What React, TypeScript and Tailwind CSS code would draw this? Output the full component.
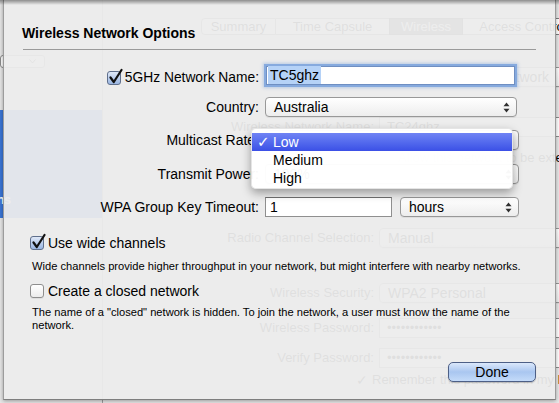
import React from 'react';

function UpDown() {
  return (
    <svg width="7" height="11" viewBox="0 0 7 11" className="shrink-0">
      <path d="M3.5 0.5 L6.5 4.2 L0.5 4.2 Z" fill="#2f2f2f" />
      <path d="M0.5 6.8 L6.5 6.8 L3.5 10.5 Z" fill="#2f2f2f" />
    </svg>
  );
}

function PopUp({ value, className = '' }: { value: string; className?: string }) {
  return (
    <div
      className={`h-[20px] shrink-0 flex items-center justify-between pl-[8px] pr-[6px] rounded-[4px] border border-[#989898] bg-gradient-to-b from-white to-[#ededed] shadow-[0_1px_0_rgba(0,0,0,0.06)] text-[14px] leading-none ${className}`}
    >
      <span className="whitespace-nowrap">{value}</span>
      <UpDown />
    </div>
  );
}

function Checkbox({ checked }: { checked?: boolean }) {
  if (!checked) {
    return (
      <span className="relative block w-[14px] h-[14px] shrink-0 rounded-[3px] border border-[#8e8e8e] bg-gradient-to-b from-white to-[#ececec] shadow-[0_1px_0_rgba(0,0,0,0.06)]" />
    );
  }
  return (
    <span className="relative block w-[14px] h-[14px] shrink-0 rounded-[3px] border border-[#5f6f8c] bg-gradient-to-b from-[#dfe8f7] to-[#9ab6e2]">
      <svg width="15" height="17" viewBox="0 0 15 17" className="absolute left-[0px] top-[-4px]">
        <path d="M2.5 9.5 L5.8 14 L13.5 2" stroke="#111" strokeWidth="2.2" fill="none" strokeLinecap="round" strokeLinejoin="round" />
      </svg>
    </span>
  );
}

function BackRow({ label, children, className = '' }: { label: string; children: React.ReactNode; className?: string }) {
  return (
    <div className={`flex items-center h-[20px] ${className}`}>
      <div className="w-[271px] shrink-0 text-right whitespace-nowrap">{label}</div>
      <div className="ml-[5px] flex">{children}</div>
    </div>
  );
}

function BackField({ value }: { value: string }) {
  return (
    <div className="h-[20px] w-[200px] shrink-0 flex items-center pl-[7px] border border-[#8c8c8c] bg-white whitespace-nowrap">{value}</div>
  );
}

// the window under the sheet, only seen through it
function BackWindow() {
  return (
    <div className="flex h-full text-[13px] text-black">
      <aside className="w-[103px] shrink-0 border-r border-[#9d9d9d] bg-[#e6e6e6] flex flex-col">
        <div className="mt-[55px] w-[45px] h-[13px] rounded-[3px] border border-[#8a8a8a] bg-white flex items-center justify-end pr-[8px]">
          <svg width="7" height="5" viewBox="0 0 7 5">
            <path d="M0.5 0.5 L3.5 4 L6.5 0.5" stroke="#444" fill="none" />
          </svg>
        </div>
        <div className="mt-[42px] h-[108px] bg-[#3a75d6] flex items-end pb-[9px] text-white text-[12px] font-bold">
          <span className="-ml-[3px]">ns</span>
        </div>
      </aside>
      <main className="flex-1 flex flex-col bg-[#e8e8e8] overflow-hidden">
        <div className="mt-[18px] ml-[98px] flex h-[17px] whitespace-nowrap text-[13px] leading-none">
          <div className="w-[75px] shrink-0 flex items-center justify-center border border-[#7c7c7c] rounded-l-[4px] bg-white">Summary</div>
          <div className="w-[113px] shrink-0 flex items-center justify-center border-y border-[#7c7c7c] bg-white">Time Capsule</div>
          <div className="w-[74px] shrink-0 flex items-center justify-center border border-[#3c3c3c] bg-[#5a5a5a] text-white">Wireless</div>
          <div className="w-[120px] shrink-0 flex items-center justify-center border-y border-[#7c7c7c] bg-white">Access Control</div>
        </div>
        <BackRow label="Wireless Mode:" className="mt-[32px]">
          <PopUp value="Create a wireless network" className="w-[220px] text-[13px]" />
        </BackRow>
        <BackRow label="Wireless Network Name:" className="mt-[30px]">
          <BackField value="TC24ghz" />
        </BackRow>
        <div className="mt-[13px] ml-[276px] h-[16px] flex items-center gap-[5px] whitespace-nowrap">
          <Checkbox />
          <span>Allow this network to be extended</span>
        </div>
        <BackRow label="Radio Channel Selection:" className="mt-[62px]">
          <PopUp value="Manual" className="w-[200px] text-[13px]" />
        </BackRow>
        <BackRow label="Wireless Security:" className="mt-[35px]">
          <PopUp value="WPA2 Personal" className="w-[200px] text-[13px]" />
        </BackRow>
        <BackRow label="Wireless Password:" className="mt-[15px]">
          <BackField value="••••••••••••" />
        </BackRow>
        <BackRow label="Verify Password:" className="mt-[10px]">
          <BackField value="••••••••••••" />
        </BackRow>
        <div className="mt-[4px] ml-[253px] h-[16px] flex items-center gap-[4px] whitespace-nowrap">
          <span className="text-[14px]">✓</span>
          <span>Remember this password in my keychain</span>
        </div>
      </main>
    </div>
  );
}

function OptionsSheet() {
  return (
    <div className="absolute left-[3px] top-0 w-[553px] h-[400px] flex flex-col bg-[#ececec]/[0.945] border-x border-[#9c9c9c] border-b border-b-[#7e7e7e] shadow-[0_1px_4px_rgba(0,0,0,0.35)] text-black">
      <div className="pt-[25px] pl-[18px] text-[14px] font-bold leading-[17px]">Wireless Network Options</div>
      <div className="mt-[7px] ml-[19px] w-[513px] h-px bg-[#9a9a9a]" />

      <div className="mt-[13px] flex items-center h-[24px]">
        <div className="w-[255px] shrink-0 flex justify-end items-center gap-[4px] pt-[6px] text-[13.8px] leading-none whitespace-nowrap">
          <Checkbox checked />
          <span>5GHz Network Name:</span>
        </div>
        <div className="ml-[7px] w-[249px] h-[19px] flex items-center pl-[1px] border border-[#6f8fc2] bg-white shadow-[0_0_0_2px_#86aade,0_0_3px_3px_rgba(120,160,220,0.45)] text-[14px] leading-none">
          <span className="bg-[#b5d2f7] px-[2px] py-[2px]">TC5ghz</span>
        </div>
      </div>

      <div className="mt-[10px] flex items-center h-[20px]">
        <div className="w-[255px] shrink-0 text-right text-[14px] leading-none">Country:</div>
        <PopUp value="Australia" className="ml-[6px] w-[252px]" />
      </div>

      <div className="mt-[13px] flex items-center h-[20px]">
        <div className="w-[255px] shrink-0 text-right text-[14px] leading-none">Multicast Rate:</div>
        <PopUp value="Low" className="ml-[6px] w-[254px]" />
      </div>

      <div className="mt-[14px] flex items-center h-[20px]">
        <div className="w-[255px] shrink-0 text-right text-[14px] leading-none">Transmit Power:</div>
        <PopUp value="100%" className="ml-[6px] w-[254px]" />
      </div>

      <div className="mt-[13px] flex items-center h-[20px]">
        <div className="w-[255px] shrink-0 text-right text-[14px] leading-none whitespace-nowrap">WPA Group Key Timeout:</div>
        <div className="ml-[6px] w-[127px] h-[20px] flex items-center pl-[4px] border border-[#8f8f8f] border-t-[#6f6f6f] bg-white text-[14px] leading-none">1</div>
        <PopUp value="hours" className="ml-[8px] w-[119px]" />
      </div>

      <div className="mt-[18px] ml-[26px] flex items-center gap-[4px] h-[16px] text-[14px] leading-none">
        <Checkbox checked />
        <span>Use wide channels</span>
      </div>
      <p className="mt-[9px] ml-[28px] text-[11.15px] leading-[13px] whitespace-nowrap">
        Wide channels provide higher throughput in your network, but might interfere with nearby networks.
      </p>

      <div className="mt-[10px] ml-[26px] flex items-center gap-[4px] h-[16px] text-[14px] leading-none">
        <Checkbox />
        <span>Create a closed network</span>
      </div>
      <p className="mt-[7px] ml-[28px] text-[11.15px] leading-[13px] whitespace-nowrap">
        The name of a "closed" network is hidden. To join the network, a user must know the name of the
        <br />
        network.
      </p>

      <button className="mt-[30px] self-end mr-[19px] w-[88px] h-[20px] rounded-[5px] border border-[#4d5f86] bg-gradient-to-b from-[#dbe8fb] via-[#a9c6f0] to-[#c4dbf9] shadow-[0_1px_1px_rgba(0,0,0,0.2)] text-[14px] leading-none">
        Done
      </button>
    </div>
  );
}

function RateMenu() {
  const items = ['Low', 'Medium', 'High'];
  return (
    <div className="absolute left-[251px] top-[128px] w-[262px] h-[61px] py-[4px] rounded-[5px] bg-white/[0.97] border border-black/10 shadow-[0_4px_10px_rgba(0,0,0,0.35)] text-[14px] leading-none">
      {items.map((item, i) => (
        <div
          key={item}
          className={`h-[18px] flex items-center ${i === 0 ? 'bg-gradient-to-b from-[#7083f4] to-[#3b4fe6] text-white' : 'text-black'}`}
        >
          <span className="w-[21px] pl-[5px] font-['DejaVu_Sans',sans-serif] text-[15px] font-bold">{i === 0 ? '✓' : ''}</span>
          <span>{item}</span>
        </div>
      ))}
    </div>
  );
}

export default function App() {
  return (
    <div className="relative w-[559px] h-[403px] overflow-hidden bg-[#e4e4e4] font-['Liberation_Sans',Arial,sans-serif]">
      <BackWindow />
      <OptionsSheet />
      <div className="absolute inset-x-0 top-0 h-[5px] bg-gradient-to-b from-black/40 to-transparent" />
      <RateMenu />
    </div>
  );
}
